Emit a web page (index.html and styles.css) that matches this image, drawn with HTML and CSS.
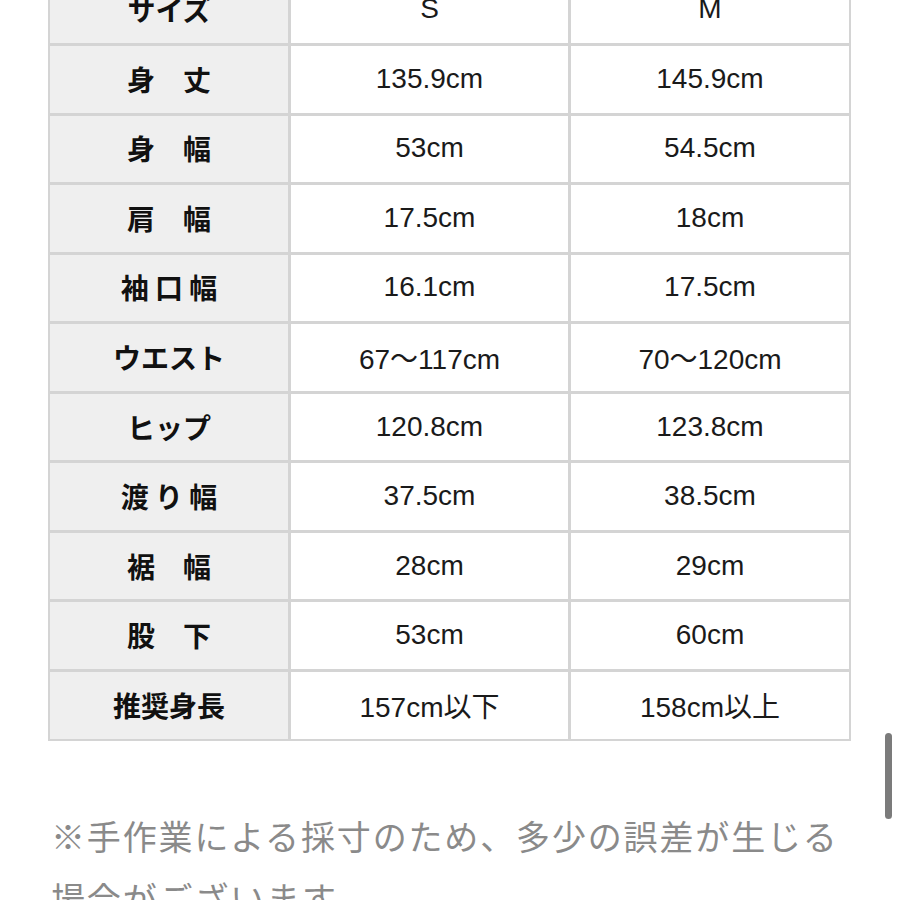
FILE: index.html
```html
<!DOCTYPE html>
<html lang="ja">
<head>
<meta charset="utf-8">
<title>サイズ表</title>
<link rel="stylesheet" href="styles.css">
</head>
<body>
<main class="page">
  <div class="size-table">
    <div class="cell head">サイズ</div><div class="cell val">S</div><div class="cell val">M</div>
    <div class="cell head">身　丈</div><div class="cell val">135.9cm</div><div class="cell val">145.9cm</div>
    <div class="cell head">身　幅</div><div class="cell val">53cm</div><div class="cell val">54.5cm</div>
    <div class="cell head">肩　幅</div><div class="cell val">17.5cm</div><div class="cell val">18cm</div>
    <div class="cell head">袖 口 幅</div><div class="cell val">16.1cm</div><div class="cell val">17.5cm</div>
    <div class="cell head">ウエスト</div><div class="cell val">67～117cm</div><div class="cell val">70～120cm</div>
    <div class="cell head">ヒップ</div><div class="cell val">120.8cm</div><div class="cell val">123.8cm</div>
    <div class="cell head">渡 り 幅</div><div class="cell val">37.5cm</div><div class="cell val">38.5cm</div>
    <div class="cell head">裾　幅</div><div class="cell val">28cm</div><div class="cell val">29cm</div>
    <div class="cell head">股　下</div><div class="cell val">53cm</div><div class="cell val">60cm</div>
    <div class="cell head">推奨身長</div><div class="cell val">157cm以下</div><div class="cell val">158cm以上</div>
  </div>
  <p class="note">※手作業による採寸のため、多少の誤差が生じる場合がございます。</p>
</main>
<div class="scrollbar"></div>
</body>
</html>
```

FILE: styles.css
```css
html, body {
  margin: 0;
  padding: 0;
  background: #ffffff;
  overflow: hidden;
}

.page {
  padding: 0 49px 0 48px;
}

.size-table {
  margin-top: -25.5px;
  width: 803px;
  box-sizing: border-box;
  display: grid;
  grid-template-columns: 238px 277px 278px;
  grid-auto-rows: 66.55px;
  gap: 3px;
  padding: 2px;
  background: #d4d4d4;
}

.cell {
  display: flex;
  align-items: center;
  justify-content: center;
  background: #ffffff;
  color: #1a1a1a;
  font-size: 28px;
  white-space: pre;
  padding-bottom: 1px;
}

.head {
  background: #efefef;
  font-family: "Noto Sans CJK JP", "Liberation Sans", sans-serif;
  font-weight: 700;
  color: #111111;
}

.val {
  font-family: "Liberation Sans", "Noto Sans CJK JP", sans-serif;
  font-weight: 400;
}

.note {
  margin: 64px 0 0 3px;
  width: 800px;
  font-family: "Noto Sans CJK JP", sans-serif;
  font-size: 34px;
  line-height: 62px;
  letter-spacing: 1.85px;
  color: #8a8a8a;
  font-weight: 400;
}

.scrollbar {
  position: fixed;
  left: 885px;
  top: 733px;
  width: 7px;
  height: 86px;
  border-radius: 4px;
  background: #7b7b7b;
}
```
